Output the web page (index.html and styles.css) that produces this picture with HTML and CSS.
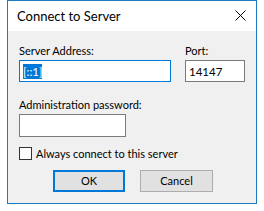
FILE: index.html
```html
<!doctype html>
<html lang="en">
<head>
	<meta charset="UTF-8">
	<title>Connect to Server</title>
	<link rel="stylesheet" href="styles.css">
</head>
<body>
<div class="window">
	<div class="titlebar">
		<div class="title">Connect to Server</div>
		<div class="close">
			<svg width="11" height="11" viewBox="0 0 11 11">
				<path d="M0.5 0.5 L10.5 10.5 M10.5 0.5 L0.5 10.5" stroke="#000" stroke-width="1" fill="none"/>
			</svg>
		</div>
	</div>
	<div class="content">
		<div class="row">
			<div class="field">
				<div class="label">Server Address:</div>
				<div class="input address focus"><span class="sel">[::1]</span></div>
			</div>
			<div class="field">
				<div class="label">Port:</div>
				<div class="input port">14147</div>
			</div>
		</div>
		<div class="field pass">
			<div class="label">Administration password:</div>
			<div class="input password"></div>
		</div>
		<div class="check">
			<div class="box"></div>
			<div class="check-label">Always connect to this server</div>
		</div>
		<div class="buttons">
			<div class="btn default">OK</div>
			<div class="btn">Cancel</div>
		</div>
	</div>
</div>
</body>
</html>
```
FILE: styles.css
```css
body
{
	margin: 0;
	background-color: #ffffff;
	font-family: "Lato", "Noto Sans", sans-serif;
	font-size: 11px;
	color: #000000;
}

.window
{
	margin-left: 7px;
	width: 248px;
	height: 202px;
	border: 1px solid #1c7ac4;
	background-color: #f0f0f0;
}

.titlebar
{
	height: 30px;
	background-color: #ffffff;
	display: flex;
	align-items: center;
	justify-content: space-between;
	padding: 0 10px 0 9px;
}

.title
{
	font-size: 13px;
}

.close
{
	display: flex;
	margin-top: -1px;
}

.content
{
	padding: 12px 11px 0 11px;
}

.row
{
	display: flex;
	gap: 14px;
}

.field
{
	display: flex;
	flex-direction: column;
}

.label
{
	height: 17px;
	line-height: 15px;
}

.input
{
	box-sizing: border-box;
	height: 22px;
	border: 1px solid #7a7a7a;
	background-color: #ffffff;
	padding: 3px 3px;
	line-height: 15px;
	font-size: 11.5px;
}

.address
{
	width: 152px;
}

.focus
{
	border-color: #0078d7;
}

.sel
{
	background-color: #0078d7;
	color: #ffffff;
	padding: 1px 0;
}

.port
{
	width: 60px;
}

.pass
{
	margin-top: 15px;
}

.password
{
	width: 107px;
	height: 23px;
}

.check
{
	display: flex;
	align-items: center;
	height: 13px;
	margin-top: 10px;
}

.box
{
	width: 11px;
	height: 11px;
	border: 1px solid #333333;
	background-color: #ffffff;
	margin-right: 4px;
}

.buttons
{
	display: flex;
	gap: 15px;
	margin-top: 10px;
	padding-left: 34px;
}

.btn
{
	box-sizing: border-box;
	width: 73px;
	height: 22px;
	border: 1px solid #adadad;
	background-color: #e1e1e1;
	text-align: center;
	line-height: 20px;
}

.default
{
	width: 72px;
	border: 2px solid #0078d7;
	line-height: 18px;
}
```
